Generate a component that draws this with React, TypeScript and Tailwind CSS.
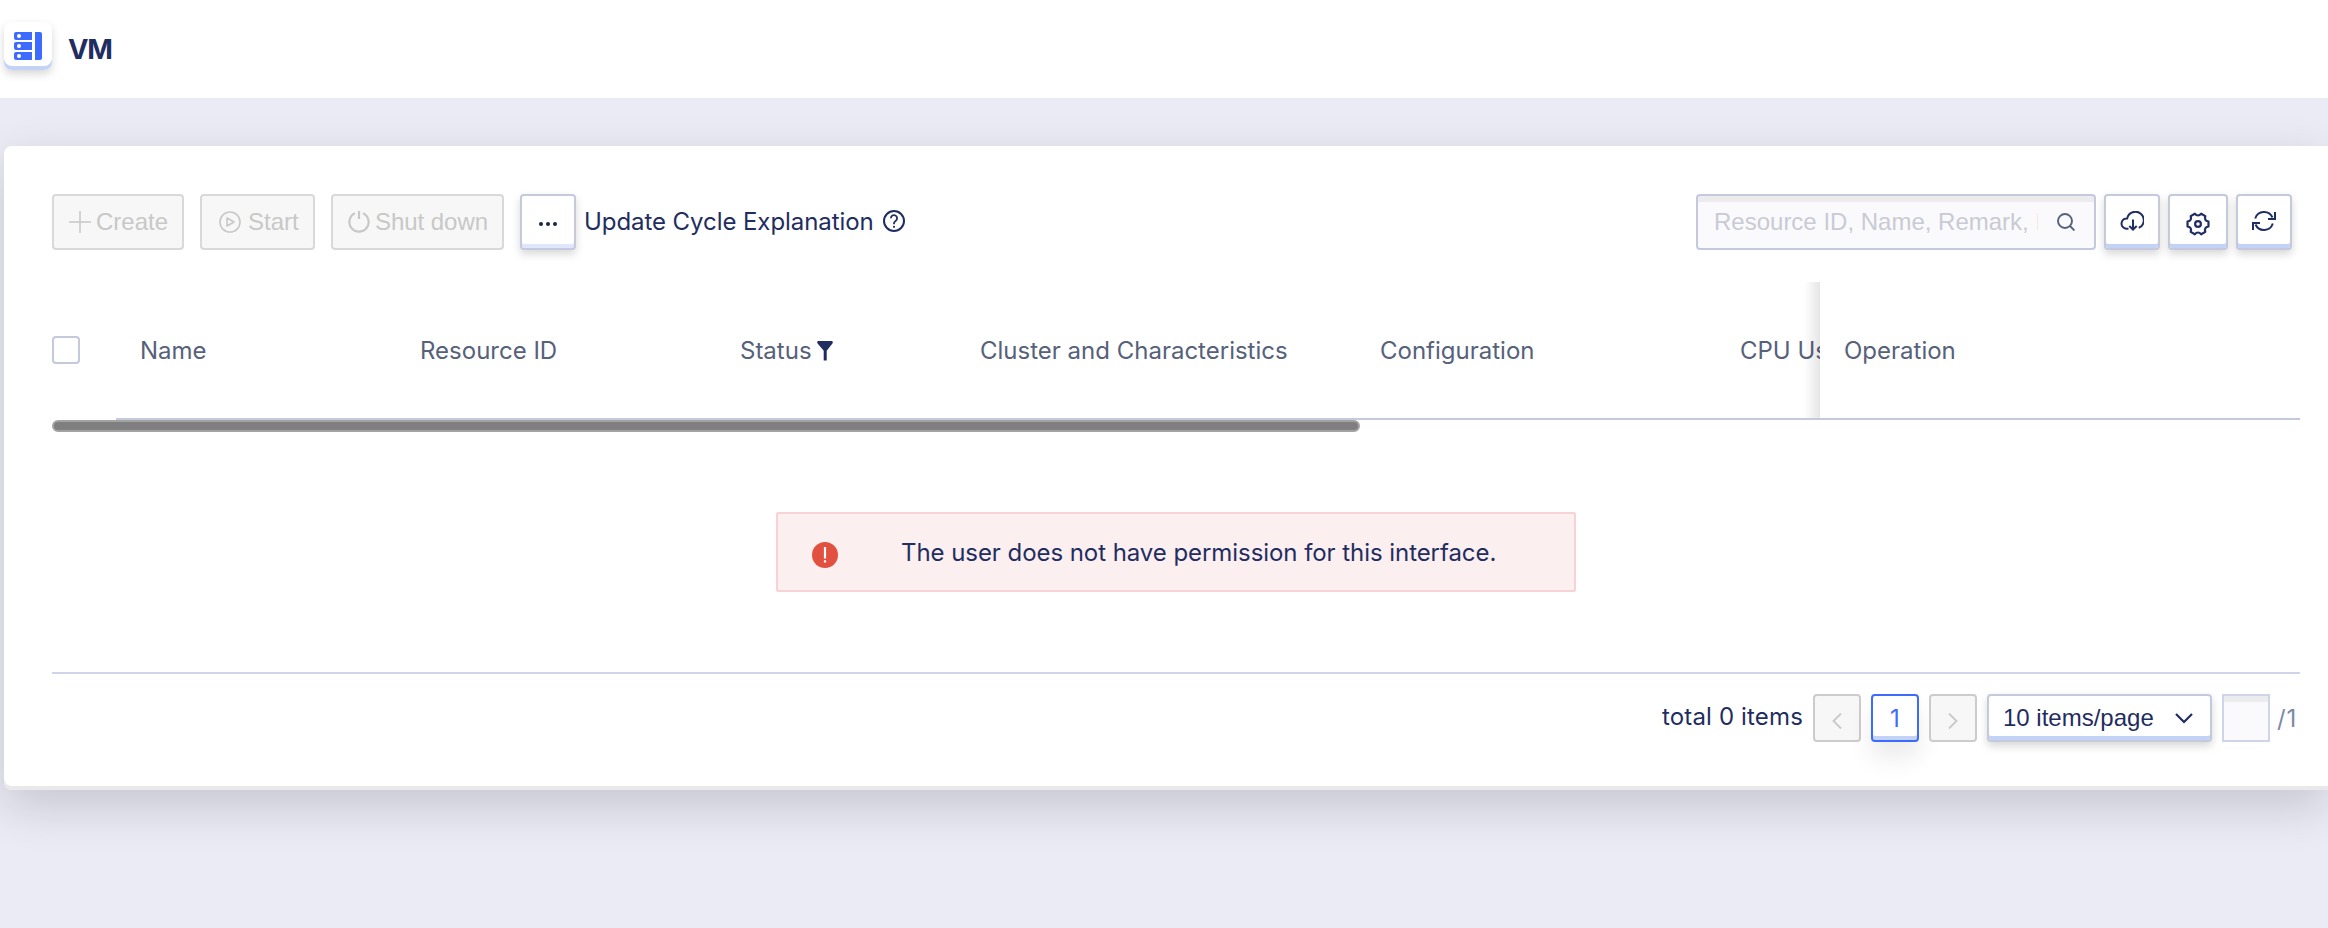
import type { ReactNode } from "react";

const disabledBtn =
  "flex h-14 items-center rounded-[4px] border-2 border-[#d9d9d9] bg-[#f7f7f7] font-['Liberation_Sans'] text-[24px] text-[#c8c8c8]";

function ToolButton({ className, children }: { className: string; children: ReactNode }) {
  return (
    <button
      className={`flex h-14 items-center justify-center rounded-[4px] border-2 border-[#c4c9db] bg-white text-[#1f2d61] ${className}`}
    >
      {children}
    </button>
  );
}

const raised = "shadow-[inset_0_-4px_0_#c3d3f8,0_4px_8px_rgba(0,0,0,0.16)]";

function ServerIcon() {
  return (
    <svg width="28" height="28" viewBox="0 0 28 28" fill="#3d6bff">
      <path d="M2 0h16v8H2a2 2 0 0 1-2-2V2a2 2 0 0 1 2-2zM2 10h16v8H2a2 2 0 0 1-2-2v-4a2 2 0 0 1 2-2zM2 20h16v8H2a2 2 0 0 1-2-2v-4a2 2 0 0 1 2-2zM21 0h5a2 2 0 0 1 2 2v24a2 2 0 0 1-2 2h-5z" />
      <g fill="#fff">
        <circle cx="5" cy="4" r="2" />
        <circle cx="5" cy="14" r="2" />
        <circle cx="5" cy="24" r="2" />
      </g>
    </svg>
  );
}

function Header({ width, children }: { width: string; children: ReactNode }) {
  return <div className={`flex shrink-0 items-center pt-[2px] pl-6 whitespace-nowrap ${width}`}>{children}</div>;
}

export default function App() {
  return (
    <div className="flex h-[928px] w-[2328px] flex-col overflow-hidden bg-[#eaebf5] font-['Inter',sans-serif] text-[24px] text-[#1f2d61]">
      <header className="relative z-10 flex h-[98px] shrink-0 bg-white pt-[22px] pl-1">
        <div className="flex h-12 w-12 items-center justify-center rounded-[8px] bg-white shadow-[inset_0_-4px_0_#c3d3f8,0_4px_8px_rgba(0,0,0,0.16)]">
          <ServerIcon />
        </div>
        <h1 className="ml-4 pt-[8px] text-[27.5px] leading-[38px] font-bold tracking-[-1.2px]">VM</h1>
      </header>

      <main className="mt-12 ml-1 flex h-[644px] shrink-0 flex-col rounded-l-[8px] bg-white pt-12 pr-7 pl-12 shadow-[inset_0_-4px_0_#e9e9e9,0_16px_48px_rgba(0,0,0,0.16)]">
        <div className="flex h-14 items-center">
          <button className={`${disabledBtn} w-[132px] pl-[15px]`}>
            <svg width="22" height="22" viewBox="0 0 22 22" fill="none" stroke="currentColor" strokeWidth="1.5">
              <path d="M11 0v22M0 11h22" />
            </svg>
            <span className="ml-[5px]">Create</span>
          </button>
          <button className={`${disabledBtn} ml-4 w-[115px] pl-[17px]`}>
            <svg width="22" height="22" viewBox="0 0 22 22" fill="none" stroke="currentColor" strokeWidth="1.6">
              <circle cx="11" cy="11" r="10" />
              <path d="M8 7v8l7-4z" strokeLinejoin="round" />
            </svg>
            <span className="ml-[7px]">Start</span>
          </button>
          <button className={`${disabledBtn} ml-4 w-[173px] pl-[15px]`}>
            <svg width="22" height="22" viewBox="0 0 22 22" fill="none" stroke="currentColor" strokeWidth="2.2">
              <path d="M11 0v8M6.900 2.300a9.600 9.600 0 1 0 8.200 0" />
            </svg>
            <span className="ml-[5px] tracking-[-0.05px] whitespace-nowrap">Shut down</span>
          </button>
          <ToolButton className="ml-4 w-14 pt-1 shadow-[inset_0_-4px_0_#e0e6fb,0_4px_8px_rgba(0,0,0,0.16)]">
            <svg width="18" height="4" viewBox="0 0 18 4" fill="#1b2447">
              <circle cx="2" cy="2" r="2" />
              <circle cx="9" cy="2" r="2" />
              <circle cx="16" cy="2" r="2" />
            </svg>
          </ToolButton>
          <span className="ml-[8px] tracking-[-0.07px] whitespace-nowrap">Update Cycle Explanation</span>
          <svg className="mb-[2px] ml-[9px]" width="22" height="22" viewBox="0 0 22 22" fill="none" stroke="currentColor" strokeWidth="2">
            <circle cx="11" cy="11" r="10" />
            <path d="M7.900 8.300a3.100 3.100 0 1 1 4.700 2.600c-1.100.7-1.600 1.200-1.600 2.300v1" strokeWidth="1.8" />
            <circle cx="11" cy="16.800" r="1.1" fill="currentColor" stroke="none" />
          </svg>

          <div className="ml-auto flex h-14 w-[400px] items-center rounded-[4px] border-2 border-[#c4c9db] bg-[#fafafd] pl-4 text-[#c9cad4] shadow-[inset_0_6px_0_#ececee]">
            <span className="w-[324px] overflow-hidden font-['Liberation_Sans'] whitespace-nowrap">
              Resource ID, Name, Remark, IP
            </span>
            <svg className="ml-[19px]" width="18" height="18" viewBox="0 0 18 18" fill="none" stroke="#56617a" strokeWidth="1.9">
              <circle cx="8" cy="8" r="7" />
              <path d="m13 13 4.500 4.500" />
            </svg>
          </div>
          <ToolButton className={`ml-2 w-14 pb-[2px] ${raised}`}>
            <svg width="24" height="20" viewBox="0 0 24 20" fill="none" stroke="currentColor" strokeWidth="2">
              <path d="M8.500 17.800H6.300A5.200 5.200 0 0 1 7.200 7.400 8.400 8.400 0 1 1 18.700 16.900M13 8.500v10M9.300 15l3.700 3.500 3.700-3.500" />
            </svg>
          </ToolButton>
          <ToolButton className={`ml-2 w-[60px] pt-1 ${raised}`}>
            <svg
              width="24"
              height="24"
              viewBox="-0.500 -0.500 25 25"
              fill="none"
              stroke="currentColor"
              strokeWidth="2.300"
              strokeLinejoin="round"
            >
              <circle cx="12" cy="12" r="3" />
              <path d="M22.900 9.500V14.500Q18.100 15.500 19.600 20.200L15.300 22.700Q12 19 8.700 22.700L4.400 20.200Q5.900 15.500 1.100 14.500V9.500Q5.900 8.500 4.400 3.800L8.700 1.300Q12 5 15.300 1.300L19.600 3.800Q18.100 8.500 22.900 9.500Z" />
            </svg>
          </ToolButton>
          <ToolButton className={`mr-2 ml-2 w-14 pb-[2px] ${raised}`}>
            <svg width="24" height="22" viewBox="0 0 24 22" fill="none" stroke="currentColor" strokeWidth="2">
              <path d="M3.200 8.500A9.300 9.300 0 0 1 20.500 7.500M23 2v7h-7M20.800 13.500A9.300 9.300 0 0 1 3.500 14.500M1 20v-7h7" />
            </svg>
          </ToolButton>
        </div>

        <div className="mt-8 flex h-[138px] shrink-0 text-[#56617a]">
          <div className="flex w-16 shrink-0 items-center pb-[2px]">
            <div className="h-7 w-7 rounded-[4px] border-2 border-[#c4c9db]" />
          </div>
          <div className="flex w-[1704px] shrink-0 overflow-hidden border-b-2 border-[#c4c9db]">
            <Header width="w-[280px]">Name</Header>
            <Header width="w-[320px]">Resource ID</Header>
            <Header width="w-[240px]">
              Status
              <svg className="ml-1" width="18" height="20" viewBox="0 0 18 20" fill="#1f2d61">
                <path d="M2 0h14q1.500.8.6 2.200L10.700 9.800V19.500H7.700V9.800L1.400 2.200Q.5.800 2 0z" />
              </svg>
            </Header>
            <Header width="w-[400px]">Cluster and Characteristics</Header>
            <Header width="w-[360px]">Configuration</Header>
            <Header width="w-[240px]">CPU Usage</Header>
          </div>
          <div className="relative flex flex-1 items-center border-b-2 border-[#c4c9db] bg-white pt-[2px] pl-6">
            <div className="absolute top-0 right-full h-[136px] w-4 bg-linear-to-l from-black/10 to-transparent" />
            Operation
          </div>
        </div>
        <div className="h-3 w-[1308px] shrink-0 rounded-[6px] border-2 border-[#a3a3a3] bg-[#7f7f7f]" />

        <div className="flex h-[242px] shrink-0 flex-col items-center border-b-2 border-[#d0d4e8] pt-20">
          <div className="flex h-20 w-[800px] items-center rounded-[2px] border-2 border-[#f9d3d3] bg-[#fceff0] pl-[34px]">
            <svg className="mt-[5px]" width="26" height="26" viewBox="0 0 26 26">
              <circle cx="13" cy="13" r="13" fill="#e2503f" />
              <path d="M11.900 5h2.200v11.500h-2.200zM11.900 18.200h2.200v2.200h-2.200z" fill="#fff" />
            </svg>
            <span className="mt-[2px] ml-[63px] tracking-[-0.06px] whitespace-nowrap">
              The user does not have permission for this interface.
            </span>
          </div>
        </div>

        <div className="mt-5 flex h-12 shrink-0 items-center justify-end">
          <span className="mr-[10px] pb-[2px] tracking-[0.15px]">total 0 items</span>
          <button className="flex h-12 w-12 items-center justify-center rounded-[4px] border-2 border-[#cccccc] bg-[#f7f7f7] pt-[6px]">
            <svg width="10" height="16" viewBox="0 0 10 16" fill="none" stroke="#c8c8c8" strokeWidth="1.800">
              <path d="M9 .5 1.500 8 9 15.500" />
            </svg>
          </button>
          <button className="ml-[10px] flex h-12 w-12 items-center justify-center rounded-[4px] border-2 border-[#3d6bff] bg-white pt-[2px] text-[#3d6bff] shadow-[inset_0_-4px_0_#c3d3f8,0_16px_24px_rgba(0,0,0,0.08)]">
            1
          </button>
          <button className="ml-[10px] flex h-12 w-12 items-center justify-center rounded-[4px] border-2 border-[#cccccc] bg-[#f7f7f7] pt-[6px]">
            <svg width="10" height="16" viewBox="0 0 10 16" fill="none" stroke="#c8c8c8" strokeWidth="1.800">
              <path d="M1 .5 8.500 8 1 15.500" />
            </svg>
          </button>
          <button
            className={`ml-[10px] flex h-12 w-[225px] items-center rounded-[4px] border-2 border-[#c4c9db] bg-white pl-[14px] font-['Liberation_Sans'] whitespace-nowrap ${raised}`}
          >
            <span className="w-[150px] text-left">10 items/page</span>
            <svg className="ml-[22px]" width="18" height="11" viewBox="0 0 18 11" fill="none" stroke="currentColor" strokeWidth="2.200">
              <path d="m1 1 8 8 8-8" />
            </svg>
          </button>
          <div className="ml-[10px] h-12 w-12 border-2 border-[#d0d4e8] bg-[#fafafd] shadow-[inset_0_6px_0_#ececee]" />
          <span className="ml-[7px] w-[23px] pt-[2px] tracking-[0.8px] text-[#7d89a8]">/1</span>
        </div>
      </main>
    </div>
  );
}
